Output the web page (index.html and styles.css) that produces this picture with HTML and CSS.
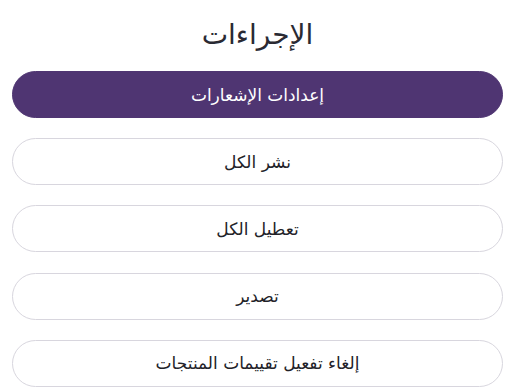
FILE: index.html
```html
<!DOCTYPE html>
<html lang="ar" dir="rtl">
<head>
<meta charset="utf-8">
<link rel="stylesheet" href="styles.css">
</head>
<body>
<div class="panel">
  <h1 class="title">الإجراءات</h1>
  <div class="actions">
    <button class="btn btn-primary">إعدادات الإشعارات</button>
    <button class="btn">نشر الكل</button>
    <button class="btn">تعطيل الكل</button>
    <button class="btn">تصدير</button>
    <button class="btn">إلغاء تفعيل تقييمات المنتجات</button>
  </div>
</div>
</body>
</html>
```
FILE: styles.css
```css
html, body {
  margin: 0;
  padding: 0;
  background: #ffffff;
}
body {
  font-family: "DejaVu Sans", "Noto Sans", sans-serif;
  color: #1f1f24;
}
.panel {
  padding: 13px 13px 0 12px;
}
.title {
  margin: 0;
  height: 58px;
  line-height: 44px;
  text-align: center;
  font-size: 28px;
  font-weight: 400;
  color: #2a2a33;
}
.actions {
  display: flex;
  flex-direction: column;
  gap: 20.2px;
}
.btn {
  box-sizing: border-box;
  height: 47px;
  width: 100%;
  border: 1px solid #d8d6de;
  border-radius: 24px;
  background: #ffffff;
  font-family: inherit;
  font-size: 17px;
  color: #222228;
  padding: 0;
}
.btn-primary {
  background: #4f3572;
  border-color: #4f3572;
  color: #ffffff;
}
```
